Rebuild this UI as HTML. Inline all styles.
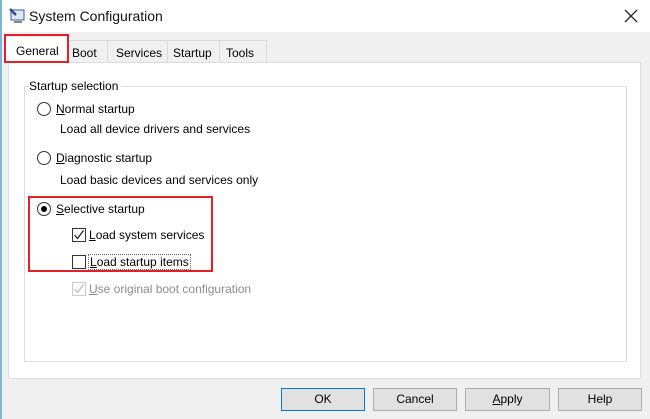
<!DOCTYPE html><html><head><style>
*{margin:0;padding:0;box-sizing:border-box}
body{width:650px;height:419px;background:#f0f0f0;font-family:"Liberation Sans",sans-serif;font-size:12px;color:#000;position:relative;overflow:hidden}
.a{position:absolute}
.t{position:absolute;white-space:nowrap}
.rad{position:absolute;width:14px;height:14px;border:1px solid #333;border-radius:50%;background:#fff}
.cb{position:absolute;width:14px;height:14px;border:1px solid #333;background:#fff}
.btn{position:absolute;top:388px;height:23px;border:1px solid #adadad;background:#e1e1e1;text-align:center;line-height:21px;font-size:12px}
u{text-decoration:underline}
</style></head><body>
<div class="a" style="left:0;top:0;width:650px;height:32px;background:#fff"></div>
<div class="a" style="left:0;top:0;width:2px;height:419px;background:#7fb4d6"></div>
<svg class="a" style="left:8px;top:7px" width="18" height="18" viewBox="0 0 18 18"><rect x="3" y="3" width="13" height="10" fill="#dfe8f5" stroke="#3a5a9a"/><path d="M2 2l6 6" stroke="#2a4a8a" stroke-width="2.5"/><rect x="6" y="14" width="8" height="2" fill="#888"/></svg>
<div class="t" style="left:29px;top:8px;font-size:14px;color:#111">System Configuration</div>
<svg class="a" style="left:624px;top:9px" width="14" height="14"><path d="M1 1L13 13M13 1L1 13" stroke="#222" stroke-width="1.3"/></svg>
<!-- tabs -->
<div class="a" style="left:67px;top:40px;width:200px;height:22px;border:1px solid #d9d9d9;border-bottom:none;background:#f0f0f0"></div>
<div class="a" style="left:107px;top:40px;width:1px;height:22px;background:#d9d9d9"></div>
<div class="a" style="left:167px;top:40px;width:1px;height:22px;background:#d9d9d9"></div>
<div class="a" style="left:219px;top:40px;width:1px;height:22px;background:#d9d9d9"></div>
<div class="a" style="left:8px;top:62px;width:633px;height:317px;background:#fff;border:1px solid #dcdcdc"></div>
<div class="a" style="left:6px;top:37px;width:61px;height:26px;background:#fff"></div>
<div class="a" style="left:4px;top:34px;width:65px;height:29px;border:2px solid #e0202a"></div>
<div class="t" style="left:16px;top:44px">General</div>
<div class="t" style="left:72px;top:46px">Boot</div>
<div class="t" style="left:116px;top:46px">Services</div>
<div class="t" style="left:173px;top:46px">Startup</div>
<div class="t" style="left:226px;top:46px">Tools</div>
<!-- group -->
<div class="a" style="left:24px;top:86px;width:603px;height:276px;border:1px solid #dcdcdc"></div>
<div class="t" style="left:29px;top:79px;background:#fff;padding-right:3px">Startup selection</div>
<div class="rad" style="left:37px;top:102px"></div>
<div class="t" style="left:56px;top:102px"><u>N</u>ormal startup</div>
<div class="t" style="left:60px;top:122px">Load all device drivers and services</div>
<div class="rad" style="left:37px;top:151px"></div>
<div class="t" style="left:56px;top:151px"><u>D</u>iagnostic startup</div>
<div class="t" style="left:60px;top:173px">Load basic devices and services only</div>
<div class="rad" style="left:37px;top:202px"></div>
<div class="a" style="left:41px;top:206px;width:6px;height:6px;border-radius:50%;background:#000"></div>
<div class="t" style="left:56px;top:202px"><u>S</u>elective startup</div>
<div class="cb" style="left:72px;top:228px"></div>
<svg class="a" style="left:73px;top:229px" width="12" height="12"><path d="M1.5 6L4.5 9.5L10.5 1.5" fill="none" stroke="#222" stroke-width="1.3"/></svg>
<div class="t" style="left:89px;top:228px"><u>L</u>oad system services</div>
<div class="cb" style="left:72px;top:255px"></div>
<div class="t" style="left:88px;top:254px;border:1px dotted #666;padding:0 1px"><u>L</u>oad startup items</div>
<div class="cb" style="left:72px;top:282px;border-color:#ccc"></div>
<svg class="a" style="left:73px;top:283px" width="12" height="12"><path d="M1.5 6L4.5 9.5L10.5 1.5" fill="none" stroke="#bbb" stroke-width="1.3"/></svg>
<div class="t" style="left:89px;top:282px;color:#8d8d8d"><u>U</u>se original boot configuration</div>
<div class="a" style="left:28px;top:196px;width:185px;height:76px;border:2px solid #e0202a"></div>
<div class="btn" style="left:281px;width:84px;border:1px solid #0078d7">OK</div>
<div class="btn" style="left:373px;width:84px">Cancel</div>
<div class="btn" style="left:465px;width:85px"><u>A</u>pply</div>
<div class="btn" style="left:558px;width:84px">Help</div>
</body></html>
